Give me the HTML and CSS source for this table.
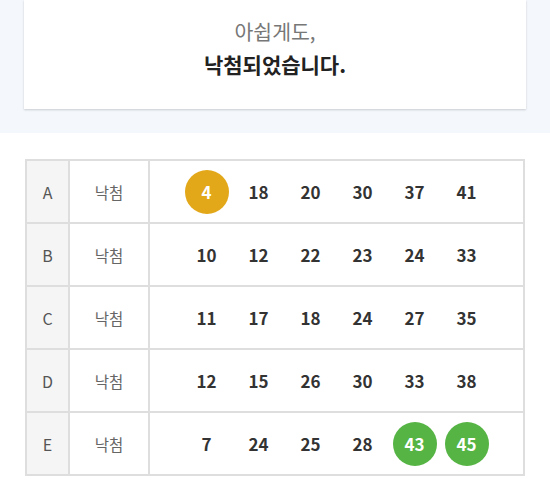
FILE: index.html
```html
<!DOCTYPE html>
<html lang="ko">
<head>
<meta charset="utf-8">
<link rel="stylesheet" href="styles.css">
</head>
<body>
<section class="top">
  <div class="card">
    <p class="sub">아쉽게도,</p>
    <p class="main">낙첨되었습니다.</p>
  </div>
</section>
<section class="result">
  <table class="lotto">
    <tr><td class="game">A</td><td class="status">낙첨</td><td class="nums"><div class="balls"><span class="ball gold">4</span><span class="ball">18</span><span class="ball">20</span><span class="ball">30</span><span class="ball">37</span><span class="ball">41</span></div></td></tr>
    <tr><td class="game">B</td><td class="status">낙첨</td><td class="nums"><div class="balls"><span class="ball">10</span><span class="ball">12</span><span class="ball">22</span><span class="ball">23</span><span class="ball">24</span><span class="ball">33</span></div></td></tr>
    <tr><td class="game">C</td><td class="status">낙첨</td><td class="nums"><div class="balls"><span class="ball">11</span><span class="ball">17</span><span class="ball">18</span><span class="ball">24</span><span class="ball">27</span><span class="ball">35</span></div></td></tr>
    <tr><td class="game">D</td><td class="status">낙첨</td><td class="nums"><div class="balls"><span class="ball">12</span><span class="ball">15</span><span class="ball">26</span><span class="ball">30</span><span class="ball">33</span><span class="ball">38</span></div></td></tr>
    <tr><td class="game">E</td><td class="status">낙첨</td><td class="nums"><div class="balls"><span class="ball">7</span><span class="ball">24</span><span class="ball">25</span><span class="ball">28</span><span class="ball green">43</span><span class="ball green">45</span></div></td></tr>
  </table>
</section>
</body>
</html>
```
FILE: styles.css
```css
* { box-sizing: border-box; }
html, body { margin: 0; padding: 0; background: #fff; }
body { font-family: "Noto Sans CJK KR", "Noto Sans", sans-serif; }
.top {
  background: #f4f8fc;
  padding: 0 24px 24px 24px;
}
.card {
  background: #fff;
  height: 109px;
  box-shadow: 0 1px 2px rgba(0,0,0,0.18);
  text-align: center;
  padding-top: 15px;
}
.card p { margin: 0; }
.sub {
  font-size: 20.5px;
  line-height: 32px;
  color: #777;
}
.main {
  font-size: 21px;
  font-weight: 700;
  line-height: 34px;
  color: #222;
}
.result { padding: 26px 25px 0 25px; }
.lotto {
  width: 100%;
  border-collapse: collapse;
  border: 2px solid #dedede;
}
.lotto td {
  border: 2px solid #dedede;
  height: 63px;
  padding: 0;
  text-align: center;
}
.game {
  width: 43px;
  background: #f5f5f5;
  color: #555;
  font-size: 16px;
}
.status {
  width: 80px;
  color: #666;
  font-size: 15.5px;
}
.balls {
  display: flex;
  justify-content: center;
}
.ball {
  width: 44px;
  height: 44px;
  margin: 0 4px;
  border-radius: 50%;
  display: flex;
  align-items: center;
  justify-content: center;
  font-size: 17px;
  font-weight: 700;
  color: #333;
}
.ball.gold { background: #e3a81a; color: #fff; }
.ball.green { background: #55b443; color: #fff; }
```
